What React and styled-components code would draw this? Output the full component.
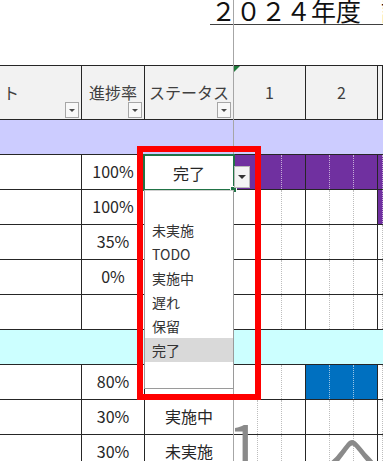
import React from "react";
import styled, { createGlobalStyle } from "styled-components";

const GlobalStyle = createGlobalStyle`
  html, body {
    margin: 0;
    padding: 0;
    background: #fff;
  }
  body {
    font-family: "Noto Sans CJK JP", "Noto Sans", sans-serif;
  }
`;

const COLS = "82px 63px 89px repeat(6, 24px) 1fr";
const LINE = "#262626";

const Page = styled.div`
  position: relative;
  width: 383px;
  height: 461px;
  overflow: hidden;
  background: #fff;
  color: #262626;
`;

const TitleBar = styled.div`
  height: 65px;
  padding-left: 210px;
`;

const Title = styled.div`
  height: 24px;
  line-height: 20px;
  border-bottom: 1px solid #404040;
  font-size: 25px;
  white-space: nowrap;
  overflow: hidden;
  padding-left: 1px;
  color: #111;
`;

const TitleRest = styled.span`
  margin-left: 20px;
`;

const Grid = styled.div`
  border-top: 1px solid ${LINE};
`;

const HeaderRow = styled.div`
  display: grid;
  grid-template-columns: ${COLS};
  height: 54px;
  box-sizing: border-box;
  border-bottom: 1px solid ${LINE};
  background: #f2f2f2;
`;

// label, filter button and marker share one grid area
const HeadCell = styled.div`
  box-sizing: border-box;
  border-right: 1px solid ${LINE};
  grid-column: span ${(p) => p.$span || 1};
  display: grid;
  grid-template: 1fr / 1fr;
  padding: 0 2px 1px 0;
  font-size: 16px;
  color: #404040;
  white-space: nowrap;

  & > * {
    grid-area: 1 / 1;
  }
`;

const HeadLabel = styled.span`
  align-self: center;
  justify-self: ${(p) => (p.$left ? "start" : "center")};
  margin-left: ${(p) => (p.$left ? "3px" : "2px")};
`;

const FilterButton = styled.span`
  align-self: end;
  justify-self: end;
  width: 14px;
  height: 16px;
  box-sizing: border-box;
  border: 1px solid #a6a6a6;
  background: #f8f8f8;
  display: flex;
  align-items: center;
  justify-content: center;

  &::after {
    content: "";
    border-left: 3px solid transparent;
    border-right: 3px solid transparent;
    border-top: 3px solid #4a4a4a;
  }
`;

const CommentMark = styled.span`
  align-self: start;
  justify-self: start;
  width: 0;
  height: 0;
  border-top: 6px solid #1e7a3a;
  border-right: 6px solid transparent;
`;

const Band = styled.div`
  height: 35px;
  box-sizing: border-box;
  border-bottom: 1px solid ${LINE};
  background: ${(p) => p.$color};
`;

const Row = styled.div`
  display: grid;
  grid-template-columns: ${COLS};
  height: 35px;
  box-sizing: border-box;
  border-bottom: 1px solid ${LINE};
`;

const Cell = styled.div`
  box-sizing: border-box;
  border-right: 1px solid ${LINE};
  display: flex;
  align-items: center;
  justify-content: center;
  padding-bottom: 2px;
  font-size: 16px;
  white-space: nowrap;
`;

const DayCell = styled.div`
  box-sizing: border-box;
  background: ${(p) => p.$fill || "transparent"};
  border-right: 1px ${(p) => (p.$edge ? "solid" : "dotted")}
    ${(p) => (p.$edge ? LINE : p.$fill ? "rgba(255,255,255,0.6)" : "#bdbdbd")};
`;

const FreezeLine = styled.div`
  position: absolute;
  left: 233px;
  top: 0;
  width: 1px;
  height: 100%;
  background: #a6a6a6;
`;

const Selection = styled.div`
  position: absolute;
  left: 143px;
  top: 154px;
  width: 92px;
  height: 37px;
  box-sizing: border-box;
  border: 2px solid #217346;
  background: #fff;
  display: flex;
  align-items: center;
  justify-content: center;
  font-size: 16px;

  &::after {
    content: "";
    position: absolute;
    right: -4px;
    bottom: -4px;
    width: 5px;
    height: 5px;
    background: #217346;
    border: 1px solid #fff;
  }
`;

const DropButton = styled.div`
  position: absolute;
  left: 234px;
  top: 166px;
  width: 16px;
  height: 22px;
  box-sizing: border-box;
  border: 1px solid #b8b8b8;
  background: #f4f4f4;
  display: flex;
  align-items: center;
  justify-content: center;

  &::after {
    content: "";
    border-left: 4px solid transparent;
    border-right: 4px solid transparent;
    border-top: 4px solid #333;
  }
`;

const List = styled.ul`
  position: absolute;
  left: 144px;
  top: 190px;
  width: 90px;
  height: 199px;
  box-sizing: border-box;
  margin: 0;
  padding: 3px 0 0;
  list-style: none;
  background: #fff;
  border: 1px solid #9a9a9a;
  border-top-color: #d0d0d0;
`;

const Item = styled.li`
  height: 24px;
  line-height: 24px;
  padding-left: 7px;
  font-size: 14px;
  color: #333;
  background: ${(p) => (p.$active ? "#d9d9d9" : "transparent")};
`;

const RedFrame = styled.div`
  position: absolute;
  left: 137px;
  top: 146px;
  width: 124px;
  height: 254px;
  box-sizing: border-box;
  border: 6px solid #ff0000;
`;

const ShapeText = styled.div`
  position: absolute;
  left: ${(p) => p.$x}px;
  top: ${(p) => p.$y}px;
  font-size: 58px;
  line-height: 1;
  color: #8a8a8a;
  white-space: nowrap;
`;

const PURPLE = "#7030a0";
const BLUE = "#0070c0";

const rows = [
  { pct: "100%", status: "", fills: [PURPLE, PURPLE, PURPLE, PURPLE, PURPLE, PURPLE, PURPLE] },
  { pct: "100%", status: "", fills: [0, 0, 0, 0, 0, 0, PURPLE] },
  { pct: "35%", status: "", fills: [] },
  { pct: "0%", status: "", fills: [] },
  { pct: "", status: "", fills: [] },
  { band: "#ccffff" },
  { pct: "80%", status: "", fills: [0, 0, 0, BLUE, BLUE, BLUE] },
  { pct: "30%", status: "実施中", fills: [] },
  { pct: "30%", status: "未実施", fills: [] },
];

const options = ["", "未実施", "TODO", "実施中", "遅れ", "保留", "完了"];

const DayCells = ({ fills }) =>
  [0, 1, 2, 3, 4, 5, 6].map((i) => (
    <DayCell key={i} $fill={fills[i] || undefined} $edge={i === 2 || i === 5} />
  ));

export default function App() {
  return (
    <Page>
      <GlobalStyle />
      <TitleBar>
        <Title>
          ２０２４年度<TitleRest>計画表</TitleRest>
        </Title>
      </TitleBar>
      <Grid>
        <HeaderRow>
          <HeadCell>
            <HeadLabel $left>ト</HeadLabel>
            <FilterButton />
          </HeadCell>
          <HeadCell>
            <HeadLabel>進捗率</HeadLabel>
            <FilterButton />
          </HeadCell>
          <HeadCell>
            <HeadLabel>ステータス</HeadLabel>
            <FilterButton />
          </HeadCell>
          <HeadCell $span={3}>
            <HeadLabel>1</HeadLabel>
            <CommentMark />
          </HeadCell>
          <HeadCell $span={3}>
            <HeadLabel>2</HeadLabel>
          </HeadCell>
          <HeadCell />
        </HeaderRow>
        <Band $color="#ccccff" />
        {rows.map((r, i) =>
          r.band ? (
            <Band key={i} $color={r.band} />
          ) : (
            <Row key={i}>
              <Cell />
              <Cell>{r.pct}</Cell>
              <Cell>{r.status}</Cell>
              <DayCells fills={r.fills} />
            </Row>
          )
        )}
      </Grid>

      <FreezeLine />
      <ShapeText $x={228} $y={412}>1</ShapeText>
      <ShapeText $x={328} $y={423}>へ</ShapeText>
      <Selection>完了</Selection>
      <DropButton />
      <List>
        {options.map((o, i) => (
          <Item key={i} $active={o === "完了"}>
            {o}
          </Item>
        ))}
      </List>
      <RedFrame />
    </Page>
  );
}
